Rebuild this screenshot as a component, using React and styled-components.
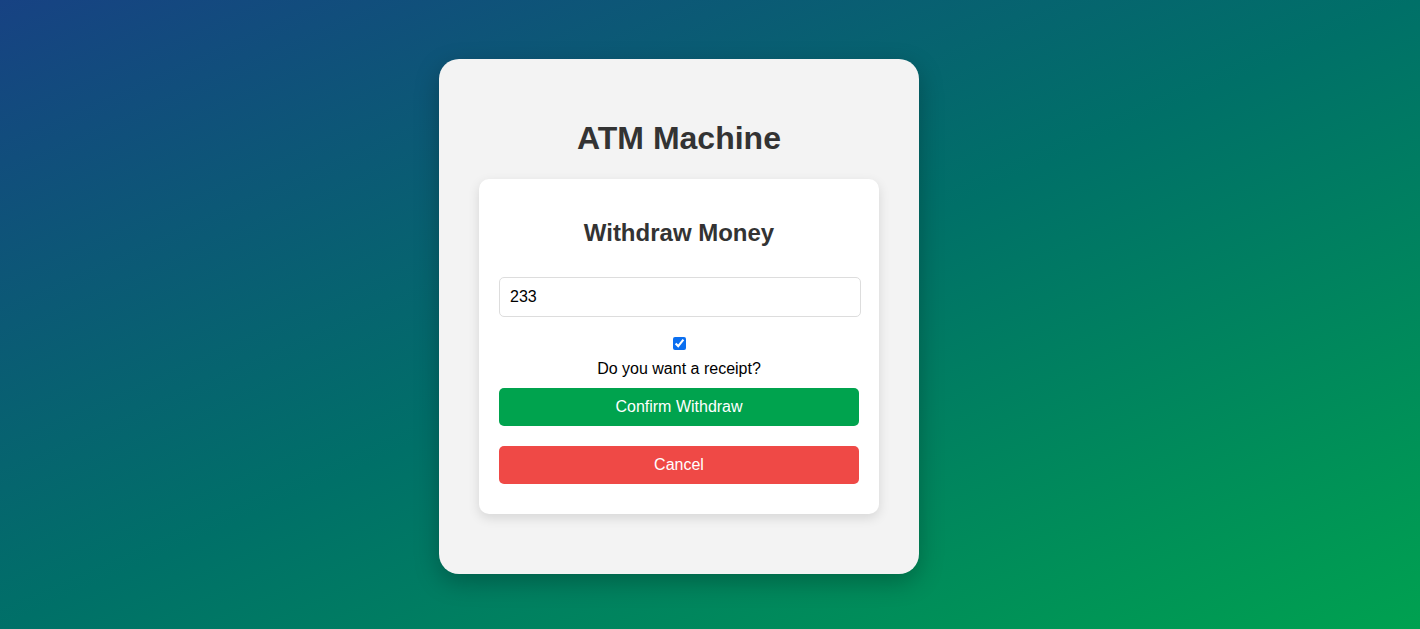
import React, { useState } from "react";
import styled, { createGlobalStyle } from "styled-components";

const GlobalStyle = createGlobalStyle`
  html, body {
    margin: 0;
    padding: 0;
  }
  body {
    font-family: "Liberation Sans", Arial, sans-serif;
  }
`;

const Page = styled.div`
  box-sizing: border-box;
  width: 100%;
  height: 100vh;
  padding: 4px 62px 0 0;
  display: flex;
  align-items: center;
  justify-content: center;
  background: linear-gradient(to bottom right, #174283, #007068 50%, #00a150);
`;

const Machine = styled.div`
  box-sizing: border-box;
  width: 480px;
  padding: 40px 40px 60px;
  background-color: #f3f3f3;
  border-radius: 20px;
  box-shadow: 0 8px 24px rgba(0, 0, 0, 0.25);
  text-align: center;
`;

const Title = styled.h1`
  margin: 21px 0 22px;
  font-size: 32px;
  line-height: 37px;
  font-weight: bold;
  color: #333;
`;

const Panel = styled.div`
  box-sizing: border-box;
  padding: 20px;
  background-color: #fff;
  border-radius: 10px;
  box-shadow: 0 4px 12px rgba(0, 0, 0, 0.12);
  display: flex;
  flex-direction: column;
`;

const Heading = styled.h2`
  margin: 20px 0 20px;
  font-size: 24px;
  line-height: 28px;
  font-weight: bold;
  color: #333;
`;

const AmountInput = styled.input`
  box-sizing: border-box;
  width: calc(100% + 2px);
  height: 40px;
  margin: 10px 0 20px;
  padding: 10px;
  font-family: inherit;
  font-size: 16px;
  color: #000;
  border: 1px solid #ddd;
  border-radius: 5px;
  outline: none;
`;

const ReceiptBox = styled.label`
  display: flex;
  flex-direction: column;
  align-items: center;
  font-size: 16px;
  color: #000;
`;

const Check = styled.input`
  width: 13px;
  height: 13px;
  margin: 0 0 9px;
  accent-color: #0b6ff0;
`;

const ReceiptText = styled.span`
  line-height: 19px;
`;

const ActionButton = styled.button`
  box-sizing: border-box;
  width: 100%;
  height: 38px;
  margin: 10px 0;
  padding: 10px;
  font-family: inherit;
  font-size: 16px;
  color: #fff;
  background-color: ${(p) => p.$bg};
  border: none;
  border-radius: 5px;
  cursor: pointer;
`;

export default function App() {
  const [amount, setAmount] = useState("233");
  const [receipt, setReceipt] = useState(true);

  return (
    <>
      <GlobalStyle />
      <Page>
        <Machine>
          <Title>ATM Machine</Title>
          <Panel>
            <Heading>Withdraw Money</Heading>
            <AmountInput
              type="number"
              value={amount}
              onChange={(e) => setAmount(e.target.value)}
            />
            <ReceiptBox>
              <Check
                type="checkbox"
                checked={receipt}
                onChange={(e) => setReceipt(e.target.checked)}
              />
              <ReceiptText>Do you want a receipt?</ReceiptText>
            </ReceiptBox>
            <ActionButton $bg="#00a34e">Confirm Withdraw</ActionButton>
            <ActionButton $bg="#ef4946">Cancel</ActionButton>
          </Panel>
        </Machine>
      </Page>
    </>
  );
}
